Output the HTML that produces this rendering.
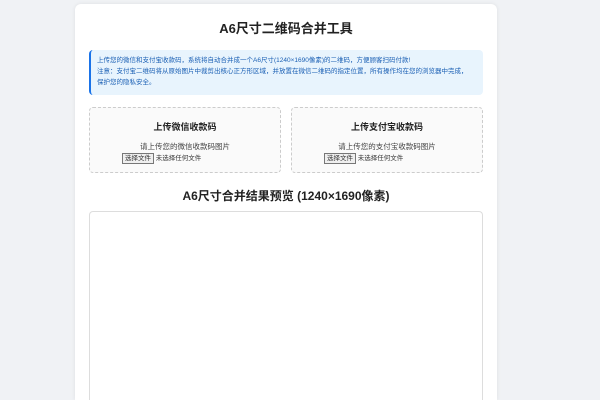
<!DOCTYPE html>
<html style="height:400px;overflow:hidden"><head><meta charset="utf-8"><style>
body{margin:0;background:#f0f2f5;font-family:"Liberation Sans","Noto Sans CJK SC",sans-serif;width:600px;height:400px;overflow:hidden;position:relative}
.card{position:absolute;left:75px;top:4px;width:422px;height:396px;background:#fff;border-radius:6px 6px 0 0;box-shadow:0 0 4px rgba(0,0,0,.08);overflow:hidden}
h1{position:absolute;left:0;right:0;top:14px;margin:0;text-align:center;font-size:13px;font-weight:bold;color:#222}
.info{position:absolute;left:14px;top:46px;width:394px;height:45px;background:#e8f4fd;border-left:2px solid #1a73e8;border-radius:4px;padding:5px 0 0 6px;box-sizing:border-box;font-size:6.5px;line-height:11px;color:#1a5fb4;white-space:nowrap;overflow:hidden}
.up{position:absolute;top:103px;width:192px;height:66px;border:1px dashed #ccc;border-radius:4px;background:#fafafa;box-sizing:border-box;text-align:center}
.up h3{margin:12px 0 0;font-size:9px;font-weight:bold;color:#222}
.up p{margin:9px 0 0;font-size:7.5px;color:#444;line-height:9px}
.f{font-size:6.5px;color:#333;margin-top:1px;text-align:left;padding-left:32px}
.f span.b{display:inline-block;border:1px solid #777;background:#efefef;padding:0 2px;line-height:9px}
h2{position:absolute;left:0;right:0;top:183px;margin:0;text-align:center;font-size:12px;font-weight:bold;color:#222}
.pv{position:absolute;left:14px;top:207px;width:394px;height:189px;border:1px solid #ddd;border-bottom:none;border-radius:4px 4px 0 0;box-sizing:border-box}
</style></head><body>
<div class="card">
<h1>A6尺寸二维码合并工具</h1>
<div class="info">上传您的微信和支付宝收款码，系统将自动合并成一个A6尺寸(1240×1690像素)的二维码，方便顾客扫码付款!<br>注意：支付宝二维码将从原始图片中裁剪出核心正方形区域，并放置在微信二维码的指定位置，所有操作均在您的浏览器中完成，<br>保护您的隐私安全。</div>
<div class="up" style="left:14px"><h3>上传微信收款码</h3><p>请上传您的微信收款码图片</p><div class="f"><span class="b">选择文件</span> 未选择任何文件</div></div>
<div class="up" style="left:216px"><h3>上传支付宝收款码</h3><p>请上传您的支付宝收款码图片</p><div class="f"><span class="b">选择文件</span> 未选择任何文件</div></div>
<h2>A6尺寸合并结果预览 (1240×1690像素)</h2>
<div class="pv"></div>
</div>
</body></html>
